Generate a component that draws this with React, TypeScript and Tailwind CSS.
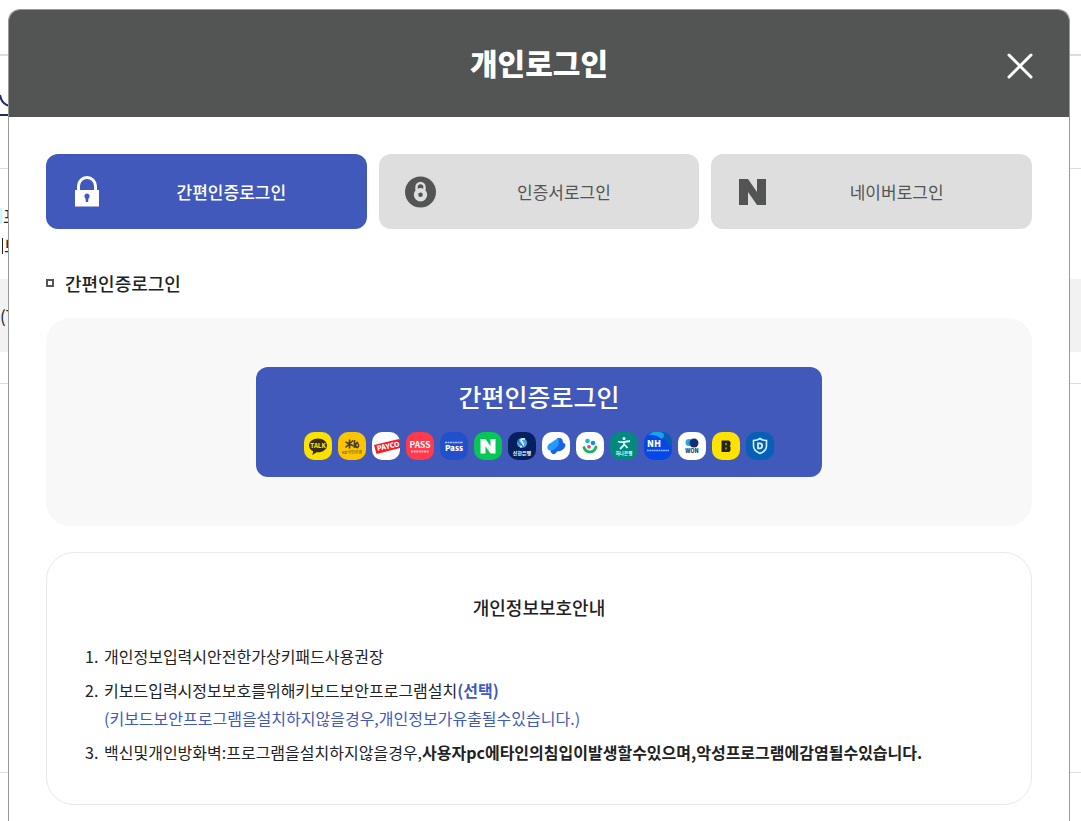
import { useState, type ReactNode } from 'react';

const tabs = [
    { id: 'simple', label: '간편인증로그인', icon: <LockIcon /> },
    { id: 'cert', label: '인증서로그인', icon: <CertIcon /> },
    { id: 'naver', label: '네이버로그인', icon: <NaverIcon /> },
];

function LockIcon() {
    return (
        <svg width="32" height="32" viewBox="0 0 32 32" aria-hidden="true">
            <path d="M6.5 15v-5a8.500 8.500 0 0 1 17 0v5" fill="none" stroke="currentColor" strokeWidth="3" />
            <path
                fillRule="evenodd"
                fill="currentColor"
                d="M3 14h24v16.500H3zM15 17.500a2.700 2.700 0 0 0-1.500 4.900l.4 3.600h2.200l.4-3.600a2.700 2.700 0 0 0-1.500-4.900z"
            />
        </svg>
    );
}

function CertIcon() {
    return (
        <svg width="32" height="32" viewBox="0 0 32 32" aria-hidden="true">
            <circle cx="15.500" cy="16" r="15.500" fill="currentColor" />
            <path d="M11.500 14v-3a4 4 0 0 1 8 0v3" fill="none" stroke="#dedede" strokeWidth="2.400" />
            <circle cx="15.500" cy="18.800" r="4.500" fill="none" stroke="#dedede" strokeWidth="4.400" />
        </svg>
    );
}

function NaverIcon() {
    return (
        <svg width="32" height="32" viewBox="0 0 32 32" aria-hidden="true">
            <path d="M2 3h9l9 13V3h9v26h-9l-9-13v13H2z" fill="currentColor" />
        </svg>
    );
}

function AppIcon({ name, bg, children }: { name: string; bg: string; children: ReactNode }) {
    return (
        <svg width="28" height="28" viewBox="0 0 28 28" role="img" aria-label={name}>
            <rect width="28" height="28" rx="10" fill={bg} />
            {children}
        </svg>
    );
}

function Providers() {
    return (
        <span className="flex justify-center gap-1.5">
            <AppIcon name="카카오톡" bg="#fae100">
                <path d="M14 6.5c-5 0-9 3-9 6.900 0 2.600 1.700 4.700 4.200 5.900L8.300 23l4.300-2.800H14c5 0 9-3 9-6.800s-4-6.900-9-6.900z" fill="#3b2c1e" />
                <text x="14" y="15.800" fontSize="6" fontWeight="900" textAnchor="middle" fill="#fae100">TALK</text>
            </AppIcon>
            <AppIcon name="국민은행" bg="#ffc400">
                <path d="M11.500 7.500v9M7.500 10l8 4M15 8.500l-7.500 7M16.500 8v8M20 10l-3.500 3 3.500 3" fill="none" stroke="#4a4030" strokeWidth="1.700" />
                <circle cx="19" cy="13.500" r="1.800" fill="none" stroke="#4a4030" strokeWidth="1.300" />
                <text x="14" y="22" fontSize="4" fontWeight="500" textAnchor="middle" fill="#6b5718">KB국민은행</text>
            </AppIcon>
            <AppIcon name="페이코" bg="#ffffff">
                <path d="M2 13 27 7l1 1v8L4.500 22z" fill="#f51d2a" />
                <text x="5.500" y="19" fontSize="7" fontWeight="900" fill="#ffffff" transform="rotate(-12 5.500 19)">PAYCO</text>
            </AppIcon>
            <AppIcon name="패스" bg="#ff3a4d">
                <text x="14" y="15.500" fontSize="8.500" fontWeight="700" textAnchor="middle" fill="#ffffff">PASS</text>
                <path d="M5 19.500h18" stroke="#ffb6bd" strokeWidth="1.800" strokeDasharray="2 .6" />
            </AppIcon>
            <AppIcon name="삼성패스" bg="#2250ca">
                <path d="M5 10.500h18" stroke="#a9beff" strokeWidth="1.600" strokeDasharray="2 .5" />
                <text x="14" y="19" fontSize="8" fontWeight="900" textAnchor="middle" fill="#ffffff">Pass</text>
            </AppIcon>
            <AppIcon name="네이버" bg="#05c755">
                <path d="M6.500 7h5l5 7.300V7h5v14.500h-5l-5-7.300v7.300h-5z" fill="#ffffff" />
            </AppIcon>
            <AppIcon name="신한은행" bg="#04205f">
                <circle cx="14" cy="11" r="5" fill="#4ea5df" />
                <path d="M17 7c-3-1-5 1-3 3s2 4-2 5" fill="none" stroke="#e8f8ff" strokeWidth="1.600" />
                <path d="M10 8c0 4 4 3 5 7" fill="none" stroke="#1356b3" strokeWidth="1" />
                <text x="14" y="22.500" fontSize="5" fontWeight="700" textAnchor="middle" fill="#ffffff">신한은행</text>
            </AppIcon>
            <AppIcon name="토스" bg="#ffffff">
                <path d="M15 6.500c4-1.500 6 .5 6 4 3 1 3 3.500 1 6-2 2-4 3-7 3-1.500 3-4 3.500-5.500 1.500-1-1-1-2-1-3z" fill="#1764e8" />
                <path d="M16.500 6.500c1.500 5-1 11-8 12-4 0-4-5-1-7 3-1 5-4 9-5z" fill="#249bff" />
            </AppIcon>
            <AppIcon name="하나인증" bg="#ffffff">
                <circle cx="11.500" cy="9" r="2.300" fill="#16b8d8" />
                <circle cx="17" cy="11" r="2.300" fill="#168fe0" />
                <circle cx="13" cy="14.800" r="1.900" fill="#ee3b78" />
                <path d="M8 15.500c2 6 10 6 12-.5" fill="none" stroke="#16b65b" strokeWidth="2.800" strokeLinecap="round" />
            </AppIcon>
            <AppIcon name="하나은행" bg="#06887f">
                <circle cx="14" cy="6.500" r="1.500" fill="#d8ffff" />
                <path d="M8 9.500c4 1.500 8 0 12-.5M14 9v4l-4 4M14 12l3.500 4" fill="none" stroke="#d8ffff" strokeWidth="1.800" />
                <text x="14" y="22.500" fontSize="4.500" fontWeight="700" textAnchor="middle" fill="#d8ffff">하나은행</text>
            </AppIcon>
            <AppIcon name="농협" bg="#0647e8">
                <path d="M10 0h8a10 10 0 0 1 10 10v8C25 10 19 4 8 1z" fill="#075eb0" />
                <path d="M9 0h7c5 1 5 4 2 7C13 3 7 2 4 3z" fill="#15a3ed" />
                <text x="3" y="14.500" fontSize="9" fontWeight="900" fill="#ffffff">NH</text>
                <path d="M3 18.500h22" stroke="#98b9ff" strokeWidth="1.500" strokeDasharray="1.800 .5" />
            </AppIcon>
            <AppIcon name="우리은행" bg="#ffffff">
                <circle cx="11" cy="10.500" r="3.500" fill="#27a7e8" />
                <circle cx="16" cy="11" r="4.500" fill="#122f76" />
                <text x="14" y="20.500" fontSize="5.500" fontWeight="900" textAnchor="middle" fill="#26376c">WON</text>
            </AppIcon>
            <AppIcon name="뱅크" bg="#ffe300">
                <path fillRule="evenodd" d="M9.500 8.500H17l1.500 1.500v3l-.8 1 .8 1v3.500L17 20H9.500zM13.500 11v2.300h1V11zm0 4.500v2h1v-2z" fill="#242322" />
            </AppIcon>
            <AppIcon name="드림인증" bg="#075fb7">
                <path d="M14 6.500c2 1.500 4 2 6.500 2V14c0 3.500-3 6-6.500 7.500C10.500 20 7.500 17.500 7.500 14V8.500c2.500 0 4.500-.5 6.500-2z" fill="none" stroke="#d2f0ff" strokeWidth="1.600" />
                <path d="M12 11.300h1.700a2.500 2.500 0 0 1 0 5H12z" fill="none" stroke="#d2f0ff" strokeWidth="1.800" />
            </AppIcon>
        </span>
    );
}

function PageBehind() {
    return (
        <div aria-hidden="true" className="absolute inset-0 overflow-hidden bg-white text-[17px] leading-[30px]">
            <div className="h-14 border-b-2 border-[#dddddd]" />
            <div className="flex h-[60px] w-28 items-end border-b-2 border-[#24286f]">
                <svg width="12" height="24" viewBox="0 0 12 24">
                    <path d="M0 5c1 6 4 10 10 11" fill="none" stroke="#24286f" strokeWidth="2" />
                </svg>
            </div>
            <div className="h-[53px] border-b border-[#dddddd]" />
            <div className="h-[110px] pt-8">
                <div className="flex items-center gap-px">
                    <span className="h-4 w-0.5 bg-[#c8f8fc]" />
                    <span>프</span>
                </div>
                <div className="flex items-center gap-px pl-0.5">
                    <span className="h-4 w-px bg-[#222222]" />
                    <span>브</span>
                </div>
            </div>
            <div className="flex h-[73px] items-center bg-[#f2f2f2]">(T</div>
            <div className="h-8 border-b border-[#dddddd]" />
            <div className="h-[389px] border-b border-[#dddddd]" />
        </div>
    );
}

export default function App() {
    const [active, setActive] = useState('simple');

    return (
        <div className="relative flex min-h-screen flex-col pt-[9px] pr-[11px] pl-2 font-['Noto_Sans_CJK_KR',sans-serif] text-[#222222]">
            <PageBehind />

            <section
                role="dialog"
                aria-labelledby="login-title"
                className="relative flex-1 rounded-t-xl border border-b-0 border-[#999999] bg-white"
            >
                {/* Header */}
                <header className="grid h-[107px] grid-cols-[1fr_auto_1fr] items-center rounded-t-[11px] bg-[#535554] px-9 text-white">
                    <h1 id="login-title" className="col-start-2 pb-1 text-[30px] leading-10 font-black">
                        개인로그인
                    </h1>
                    <button type="button" aria-label="닫기" className="cursor-pointer justify-self-end pt-1">
                        <svg width="26" height="26" viewBox="0 0 26 26" fill="none" stroke="currentColor" strokeWidth="3" strokeLinecap="round">
                            <path d="M2 2l22 22M24 2 2 24" />
                        </svg>
                    </button>
                </header>

                <div className="px-[37px] pt-[37px] pb-4">
                    {/* Login methods */}
                    <div role="tablist" className="grid grid-cols-3 gap-3">
                        {tabs.map((tab) => (
                            <button
                                key={tab.id}
                                type="button"
                                role="tab"
                                aria-selected={active === tab.id}
                                onClick={() => setActive(tab.id)}
                                className={`
                                    flex h-[75px] cursor-pointer items-center rounded-xl pr-7 pl-[26px] text-[17px] leading-7
                                    ${active === tab.id
                                        ? 'bg-[#4159bb] font-medium text-white'
                                        : 'bg-[#dedede] text-[#535554]'
                                    }
                                `}
                            >
                                <span className="w-[52px] shrink-0">{tab.icon}</span>
                                <span className="flex-1 text-center">{tab.label}</span>
                            </button>
                        ))}
                    </div>

                    <h2 className="mt-10 flex items-center gap-[11px] text-lg leading-7 font-medium">
                        <span className="size-2 border-2 border-[#555555]" />
                        간편인증로그인
                    </h2>

                    <div className="mt-[21px] flex justify-center rounded-3xl bg-[#f8f8f8] px-6 py-[49px]">
                        <button
                            type="button"
                            className="flex w-full max-w-[566px] cursor-pointer flex-col items-center gap-[18px] rounded-xl bg-[#4159bb] pt-[11px] pb-[17px] text-white"
                        >
                            <span className="text-[25px] leading-9 font-medium">간편인증로그인</span>
                            <Providers />
                        </button>
                    </div>

                    {/* Privacy notice */}
                    <div className="mt-[26px] rounded-[28px] border border-[#e8e8e8] px-[38px] pt-10 pb-[38px]">
                        <h3 className="text-center text-lg leading-7 font-medium">개인정보보호안내</h3>
                        <ol className="mt-[21px] space-y-1.5 text-base leading-7">
                            <li className="flex">
                                <span className="w-[19px] shrink-0">1.</span>
                                <p>개인정보입력시안전한가상키패드사용권장</p>
                            </li>
                            <li className="flex">
                                <span className="w-[19px] shrink-0">2.</span>
                                <div>
                                    <p>
                                        키보드입력시정보보호를위해키보드보안프로그램설치
                                        <strong className="font-bold text-[#4159bb]">(선택)</strong>
                                    </p>
                                    <p className="text-[#4159bb]">
                                        (키보드보안프로그램을설치하지않을경우,개인정보가유출될수있습니다.)
                                    </p>
                                </div>
                            </li>
                            <li className="flex">
                                <span className="w-[19px] shrink-0">3.</span>
                                <p>
                                    백신및개인방화벽:프로그램을설치하지않을경우,
                                    <strong className="font-bold">
                                        사용자pc에타인의침입이발생할수있으며,악성프로그램에감염될수있습니다.
                                    </strong>
                                </p>
                            </li>
                        </ol>
                    </div>
                </div>
            </section>
        </div>
    );
}
